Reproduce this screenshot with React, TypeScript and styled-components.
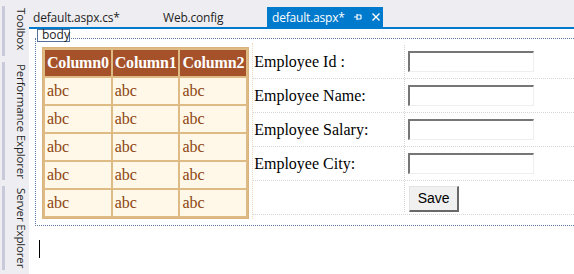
import React from 'react';
import styled, { createGlobalStyle } from 'styled-components';

const Global = createGlobalStyle`
  html, body { margin: 0; padding: 0; }
  body { width: 574px; height: 274px; overflow: hidden; background: #eeeef2; }
`;

const Shell = styled.div`
  display: flex;
  width: 574px;
  height: 274px;
  background: #eeeef2;
  overflow: hidden;
`;

const Sidebar = styled.div`
  width: 29px;
  flex: none;
  display: flex;
  flex-direction: column;
  padding-top: 6px;
  gap: 6px;
  box-sizing: border-box;
`;

const SideTab = styled.div<{ $h: number }>`
  height: ${p => p.$h}px;
  margin-left: 2px;
  border-left: 3px solid #c9cad9;
  padding-left: 4px;
  writing-mode: vertical-rl;
  font: 11.5px "Open Sans", "Noto Sans", sans-serif;
  letter-spacing: -0.15px;
  line-height: 16px;
  color: #1e1e1e;
  padding-top: 2px;
  box-sizing: border-box;
  white-space: nowrap;
`;

const Main = styled.div`
  flex: 1;
  display: flex;
  flex-direction: column;
  min-width: 0;
`;

const TabStrip = styled.div`
  height: 27px;
  flex: none;
  display: flex;
  align-items: flex-end;
  border-bottom: 2px solid #007acc;
`;

const Tab = styled.div<{ $active?: boolean; $w: number }>`
  width: ${p => p.$w}px;
  height: 20px;
  box-sizing: border-box;
  display: flex;
  align-items: center;
  gap: 8px;
  padding-left: ${p => (p.$active ? 5 : 4)}px;
  font: 12px "Open Sans", "Noto Sans", sans-serif;
  letter-spacing: -0.2px;
  color: ${p => (p.$active ? '#ffffff' : '#1e1e1e')};
  background: ${p => (p.$active ? '#007acc' : 'transparent')};
  white-space: nowrap;
`;

const TabIcon = styled.svg`
  flex: none;
`;

const Editor = styled.div`
  flex: 1;
  background: #ffffff;
  padding: 9px 0 0 6px;
  display: flex;
  flex-direction: column;
`;

const BodyFrame = styled.div`
  position: relative;
  border: 1px dotted #5b7aa8;
  border-right: none;
  height: 188px;
  box-sizing: border-box;
  display: flex;
  align-items: flex-start;
  padding: 4px 0 0 6px;
`;

const TagLabel = styled.div`
  position: absolute;
  top: -10px;
  left: 1px;
  height: 13px;
  width: 33px;
  box-sizing: border-box;
  border: 1px solid #52729c;
  background: #fff;
  font: 12px "Open Sans", "Noto Sans", sans-serif;
  line-height: 10px;
  color: #1e1e1e;
  padding-left: 4px;
`;

const GridWrap = styled.div`
  padding-top: 4px;
  padding-right: 3px;
  border-right: 1px dotted #f0d8b8;
`;

const Grid = styled.table`
  border-collapse: separate;
  border-spacing: 2px;
  background: #deba84;
  border: 1px solid #d9b27c;
  font-family: "Liberation Serif", "Times New Roman", serif;
  font-size: 16px;
`;

const HeadCell = styled.th`
  background: #a55129;
  color: #ffffff;
  font-weight: bold;
  width: 61px;
  padding: 4px 2px;
  height: 18px;
  line-height: 18px;
  text-align: center;
  white-space: nowrap;
  letter-spacing: -0.2px;
`;

const Cell = styled.td`
  background: #fff7e7;
  color: #8c4510;
  padding: 4px 2px;
  height: 18px;
  line-height: 18px;
  text-align: left;
`;

const Form = styled.div`
  flex: 1;
  display: flex;
  flex-direction: column;
  padding-top: 2px;
`;

const FormRow = styled.div<{ $end?: boolean }>`
  height: 34px;
  box-sizing: border-box;
  display: flex;
  align-items: ${p => (p.$end ? 'flex-end' : 'center')};
  padding-bottom: ${p => (p.$end ? 2 : 0)}px;
  border-bottom: 1px dotted #d6d6d6;
`;

const Label = styled.div`
  width: 152px;
  flex: none;
  align-self: stretch;
  display: flex;
  align-items: center;
  padding-left: 1px;
  box-sizing: border-box;
  border-right: 1px dotted #d6d6d6;
  font-family: "Liberation Serif", "Times New Roman", serif;
  font-size: 16px;
  color: #000;
`;

const Field = styled.div`
  flex: 1;
  display: flex;
  align-items: center;
  padding-left: 3px;
`;

const TextBox = styled.input`
  width: 126px;
  height: 21px;
  box-sizing: border-box;
  margin: 0;
  border-style: solid;
  border-width: 2px 1px 1px 2px;
  border-color: #767676 #eeeeee #eeeeee #767676;
  background: #fff;
  outline: none;
`;

const SaveButton = styled.button`
  width: 50px;
  height: 26px;
  margin: 0 0 0 1px;
  box-sizing: border-box;
  font: 14px "Liberation Sans", Arial, sans-serif;
  color: #000;
  background: #f0f0f0;
  border-style: solid;
  border-width: 1px 2px 2px 1px;
  border-color: #e3e3e3 #696969 #696969 #e3e3e3;
  padding: 0 0 1px 0;
`;

const Caret = styled.div`
  margin: 14px 0 0 4px;
  width: 1px;
  height: 18px;
  background: #000;
`;

const rows = [0, 1, 2, 3, 4];
const labels = ['Employee Id :', 'Employee Name:', 'Employee Salary:', 'Employee City:'];

export default function App() {
  return (
    <>
      <Global />
      <Shell>
        <Sidebar>
          <SideTab $h={50}>Toolbox</SideTab>
          <SideTab $h={118}>Performance Explorer</SideTab>
          <SideTab $h={84}>Server Explorer</SideTab>
        </Sidebar>
        <Main>
          <TabStrip>
            <Tab $w={130}>default.aspx.cs*</Tab>
            <Tab $w={108}>Web.config</Tab>
            <Tab $active $w={116}>
              default.aspx*
              <TabIcon width="10" height="10" viewBox="0 0 10 10">
                <path d="M1 5h3M4 2v6M4 3h4M4 7h4M8 3v4" stroke="#fff" strokeWidth="1.2" fill="none" />
              </TabIcon>
              <TabIcon width="10" height="10" viewBox="0 0 10 10">
                <path d="M1.5 1.5l7 7M8.5 1.5l-7 7" stroke="#fff" strokeWidth="1.4" fill="none" />
              </TabIcon>
            </Tab>
          </TabStrip>
          <Editor>
            <BodyFrame>
              <TagLabel>body</TagLabel>
              <GridWrap>
                <Grid>
                  <thead>
                    <tr>
                      <HeadCell>Column0</HeadCell>
                      <HeadCell>Column1</HeadCell>
                      <HeadCell>Column2</HeadCell>
                    </tr>
                  </thead>
                  <tbody>
                    {rows.map(r => (
                      <tr key={r}>
                        <Cell>abc</Cell>
                        <Cell>abc</Cell>
                        <Cell>abc</Cell>
                      </tr>
                    ))}
                  </tbody>
                </Grid>
              </GridWrap>
              <Form>
                {labels.map(l => (
                  <FormRow key={l}>
                    <Label>{l}</Label>
                    <Field>
                      <TextBox type="text" />
                    </Field>
                  </FormRow>
                ))}
                <FormRow $end>
                  <Label />
                  <Field>
                    <SaveButton>Save</SaveButton>
                  </Field>
                </FormRow>
              </Form>
            </BodyFrame>
            <Caret />
          </Editor>
        </Main>
      </Shell>
    </>
  );
}
